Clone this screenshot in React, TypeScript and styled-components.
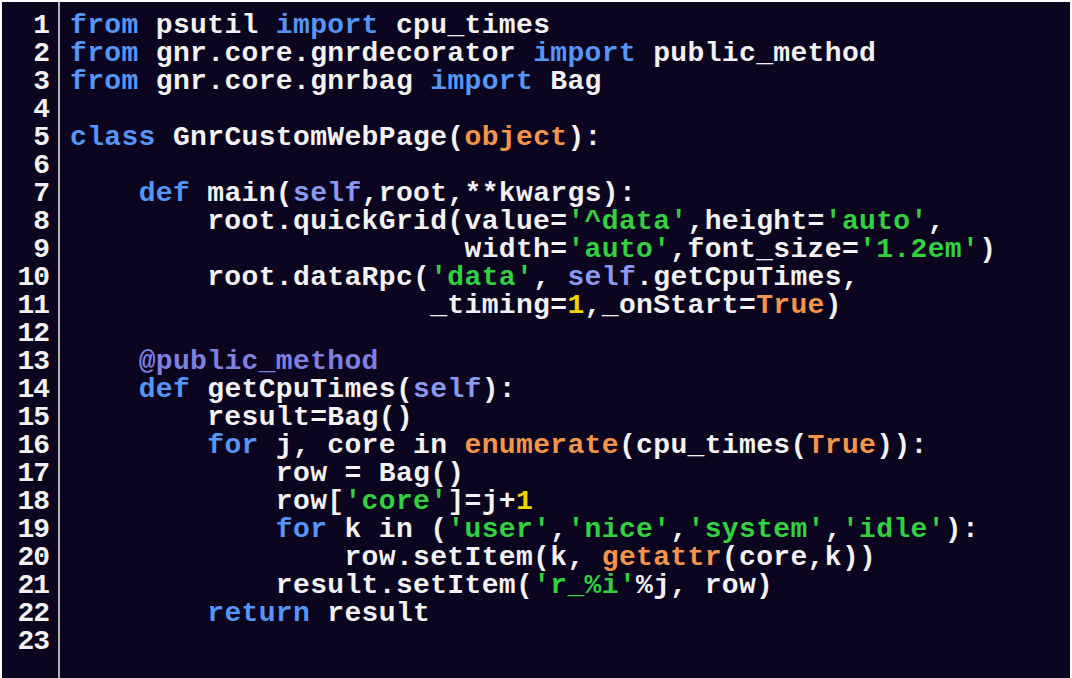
import React from "react";
import styled, { createGlobalStyle } from "styled-components";

const Global = createGlobalStyle`
  html, body { margin: 0; padding: 0; background: #ffffff; }
  body { width: 1072px; height: 678px; overflow: hidden; }
`;

const Frame = styled.div`
  margin: 2px 2px 0 2px;
  height: 676px;
  background: #0b0520;
  display: grid;
  grid-template-columns: 56px 2px 1fr;
  font-family: "Liberation Mono", "Courier New", monospace;
  font-weight: bold;
  font-size: 28px;
  letter-spacing: 0.35px;
  line-height: 28px;
  color: #f2f2f2;
`;

const Gutter = styled.div`
  padding: 10px 9px 0 0;
  text-align: right;
  letter-spacing: -1px;
`;

const Rule = styled.div`
  background: #b4b4b4;
`;

const Code = styled.pre`
  margin: 0;
  padding: 10px 0 0 10px;
  font: inherit;
  letter-spacing: inherit;
  white-space: pre;
`;

const Line = styled.div`
  height: 28px;
`;

type Kind = "kw" | "self" | "str" | "num" | "bi" | "dec";

const colors: Record<Kind, string> = {
  kw: "#5596f6",
  self: "#8b9af0",
  str: "#33d13f",
  num: "#f2d300",
  bi: "#f5954a",
  dec: "#7f80e0",
};

const Tok = styled.span<{ $k: Kind }>`
  color: ${(p) => colors[p.$k]};
`;

type Seg = string | [Kind, string];

const lines: Seg[][] = [
  [["kw", "from"], " psutil ", ["kw", "import"], " cpu_times"],
  [["kw", "from"], " gnr.core.gnrdecorator ", ["kw", "import"], " public_method"],
  [["kw", "from"], " gnr.core.gnrbag ", ["kw", "import"], " Bag"],
  [],
  [["kw", "class"], " GnrCustomWebPage(", ["bi", "object"], "):"],
  [],
  ["    ", ["kw", "def"], " main(", ["self", "self"], ",root,**kwargs):"],
  ["        root.quickGrid(value=", ["str", "'^data'"], ",height=", ["str", "'auto'"], ","],
  ["                       width=", ["str", "'auto'"], ",font_size=", ["str", "'1.2em'"], ")"],
  ["        root.dataRpc(", ["str", "'data'"], ", ", ["self", "self"], ".getCpuTimes,"],
  ["                     _timing=", ["num", "1"], ",_onStart=", ["bi", "True"], ")"],
  [],
  ["    ", ["dec", "@public_method"]],
  ["    ", ["kw", "def"], " getCpuTimes(", ["self", "self"], "):"],
  ["        result=Bag()"],
  ["        ", ["kw", "for"], " j, core in ", ["bi", "enumerate"], "(cpu_times(", ["bi", "True"], ")):"],
  ["            row = Bag()"],
  ["            row[", ["str", "'core'"], "]=j+", ["num", "1"]],
  ["            ", ["kw", "for"], " k in (", ["str", "'user'"], ",", ["str", "'nice'"], ",", ["str", "'system'"], ",", ["str", "'idle'"], "):"],
  ["                row.setItem(k, ", ["bi", "getattr"], "(core,k))"],
  ["            result.setItem(", ["str", "'r_%i'"], "%j, row)"],
  ["        ", ["kw", "return"], " result"],
  [],
];

export default function App() {
  return (
    <>
      <Global />
      <Frame>
        <Gutter>
          {lines.map((_, i) => (
            <Line key={i}>{i + 1}</Line>
          ))}
        </Gutter>
        <Rule />
        <Code>
          {lines.map((segs, i) => (
            <Line key={i}>
              {segs.map((s, j) =>
                typeof s === "string" ? (
                  <React.Fragment key={j}>{s}</React.Fragment>
                ) : (
                  <Tok key={j} $k={s[0]}>
                    {s[1]}
                  </Tok>
                )
              )}
            </Line>
          ))}
        </Code>
      </Frame>
    </>
  );
}
